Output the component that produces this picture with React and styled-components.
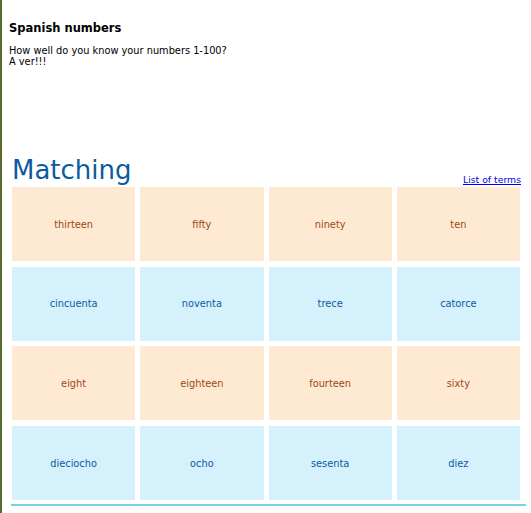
import React from "react";
import styled, { createGlobalStyle } from "styled-components";

const Global = createGlobalStyle`
  html, body { margin: 0; padding: 0; background: #fff; }
  body { font-family: "DejaVu Sans", Verdana, sans-serif; }
`;

const Page = styled.div`
  border-left: 2px solid #556b2f;
  min-height: 513px;
  box-sizing: border-box;
  padding: 19px 0 0 7px;
`;

const Title = styled.h1`
  margin: 0 0 8px 0;
  font-size: 11.5px;
  font-weight: bold;
  line-height: 18px;
  color: #000;
`;

const Intro = styled.p`
  margin: 0;
  font-size: 9.8px;
  line-height: 11px;
  color: #000;
`;

const Board = styled.section`
  margin: 85px 0 0 2px;
  width: 515px;
  border-bottom: 2px solid #7ccfe4;
  padding-bottom: 4px;
`;

const Header = styled.div`
  display: flex;
  justify-content: space-between;
  align-items: flex-end;
  width: 509px;
  margin-left: 1px;
  height: 34px;
  margin-bottom: 1px;
`;

const Heading = styled.h2`
  margin: 0;
  font-size: 26px;
  font-weight: normal;
  line-height: 32px;
  color: #0d5a9e;
`;

const TermsLink = styled.a`
  font-size: 9.3px;
  color: #0000ee;
  text-decoration: underline;
  margin-bottom: 1px;
`;

const Grid = styled.div`
  display: grid;
  grid-template-columns: repeat(4, 1fr);
  grid-auto-rows: 74px;
  column-gap: 5px;
  row-gap: 5.7px;
  width: 508px;
  margin-left: 1px;
`;

const Tile = styled.div`
  display: flex;
  align-items: center;
  justify-content: center;
  font-size: 9.8px;
  background: ${(p) => (p.$lang === "en" ? "#fee9d3" : "#d4f1fc")};
  color: ${(p) => (p.$lang === "en" ? "#9a4a14" : "#0c5aa2")};
`;

const rows = [
  { lang: "en", words: ["thirteen", "fifty", "ninety", "ten"] },
  { lang: "es", words: ["cincuenta", "noventa", "trece", "catorce"] },
  { lang: "en", words: ["eight", "eighteen", "fourteen", "sixty"] },
  { lang: "es", words: ["dieciocho", "ocho", "sesenta", "diez"] },
];

export default function App() {
  return (
    <>
      <Global />
      <Page>
        <Title>Spanish numbers</Title>
        <Intro>
          How well do you know your numbers 1-100?
          <br />A ver!!!
        </Intro>
        <Board>
          <Header>
            <Heading>Matching</Heading>
            <TermsLink href="#">List of terms</TermsLink>
          </Header>
          <Grid>
            {rows.map((r, i) =>
              r.words.map((w) => (
                <Tile key={i + w} $lang={r.lang}>
                  {w}
                </Tile>
              ))
            )}
          </Grid>
        </Board>
      </Page>
    </>
  );
}
